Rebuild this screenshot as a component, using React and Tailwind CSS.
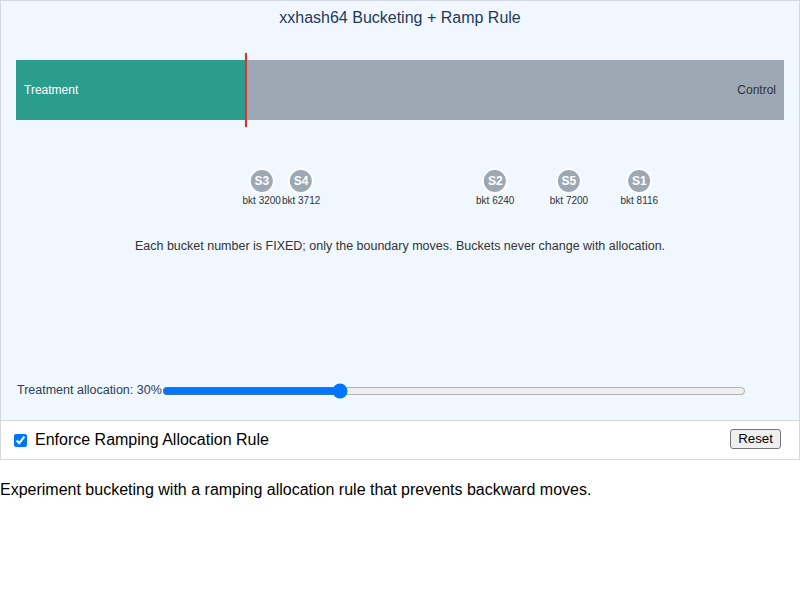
import { useState } from "react";

const START = [
  { id: "S1", bucket: 8116 },
  { id: "S2", bucket: 6240 },
  { id: "S3", bucket: 3200 },
  { id: "S4", bucket: 3712 },
  { id: "S5", bucket: 7200 },
];

const App = () => {
  const [alloc, setAlloc] = useState(30);
  const [enforce, setEnforce] = useState(true);

  const onSlide = (e) => {
    const v = Number(e.target.value);
    if (enforce && v < alloc) return; // ramp rule: no backward moves
    setAlloc(v);
  };

  return (
    <div className="font-['Liberation_Sans',Arial,sans-serif] w-[800px]">
      <div className="border border-[#d4d9e0]">
        <div className="bg-[#f0f7ff] h-[419px] px-[15px] pt-[7px] flex flex-col">
          <h1 className="text-center text-[16px] leading-[20px] text-[#1f3a5a]">
            xxhash64 Bucketing + Ramp Rule
          </h1>

          <div className="relative mt-[32px] h-[60px] flex bg-[#9ca8b4]">
            <div
              className="bg-[#2a9d8f] h-full flex items-center pl-2 text-white text-[12px]"
              style={{ width: `${alloc}%` }}
            >
              Treatment
            </div>
            <div className="flex-1 flex items-center justify-end pr-2 text-[12px] text-[#333]">
              Control
            </div>
            <div
              className="absolute top-[-7px] bottom-[-7px] w-[2px] bg-[#d0392b] shadow-[0_0_1px_#e06055]"
              style={{ left: `calc(${alloc}% - 1px)` }}
            />
          </div>

          <div className="relative h-[52px] mt-[48px]">
            {START.map((s) => (
              <div
                key={s.id}
                className="absolute top-0 flex flex-col items-center -translate-x-1/2"
                style={{ left: `${s.bucket / 100}%` }}
              >
                <div className="w-[26px] h-[26px] rounded-full bg-[#9ca8b4] border-2 border-white flex items-center justify-center text-white text-[12px] font-bold">
                  {s.id}
                </div>
                <div className="text-[10px] leading-[12px] mt-[1px] text-[#333] whitespace-nowrap">
                  bkt {s.bucket}
                </div>
              </div>
            ))}
          </div>

          <p className="text-center text-[12.5px] leading-[14px] text-[#333] mt-[19px]">
            Each bucket number is FIXED; only the boundary moves. Buckets never change with allocation.
          </p>

          <div className="mt-auto mb-[20px] flex items-center">
            <span className="text-[12.5px] text-[#2c3e55] pl-[1px]">
              Treatment allocation: {alloc}%
            </span>
            <input
              type="range"
              min="0"
              max="100"
              value={alloc}
              onChange={onSlide}
              className="w-[584px] m-0"
            />
          </div>
        </div>

        <div className="h-[39px] border-t border-[#d4d9e0] bg-white flex items-center justify-between pl-[13px] pr-[18px]">
          <label className="flex items-center gap-[8px] text-[16px] text-black">
            <input
              type="checkbox"
              checked={enforce}
              onChange={(e) => setEnforce(e.target.checked)}
              className="w-[13px] h-[13px] m-0"
            />
            Enforce Ramping Allocation Rule
          </label>
          <button
            onClick={() => setAlloc(30)}
            className="text-[13.33px] leading-[16px] h-[20px] px-[7px] border border-[#767676] rounded-[3px] bg-[#efefef] -mt-[2px]"
          >
            Reset
          </button>
        </div>
      </div>

      <p className="mt-[21px] text-[16px] leading-[18px] text-black">
        Experiment bucketing with a ramping allocation rule that prevents backward moves.
      </p>
    </div>
  );
};

export default App;
